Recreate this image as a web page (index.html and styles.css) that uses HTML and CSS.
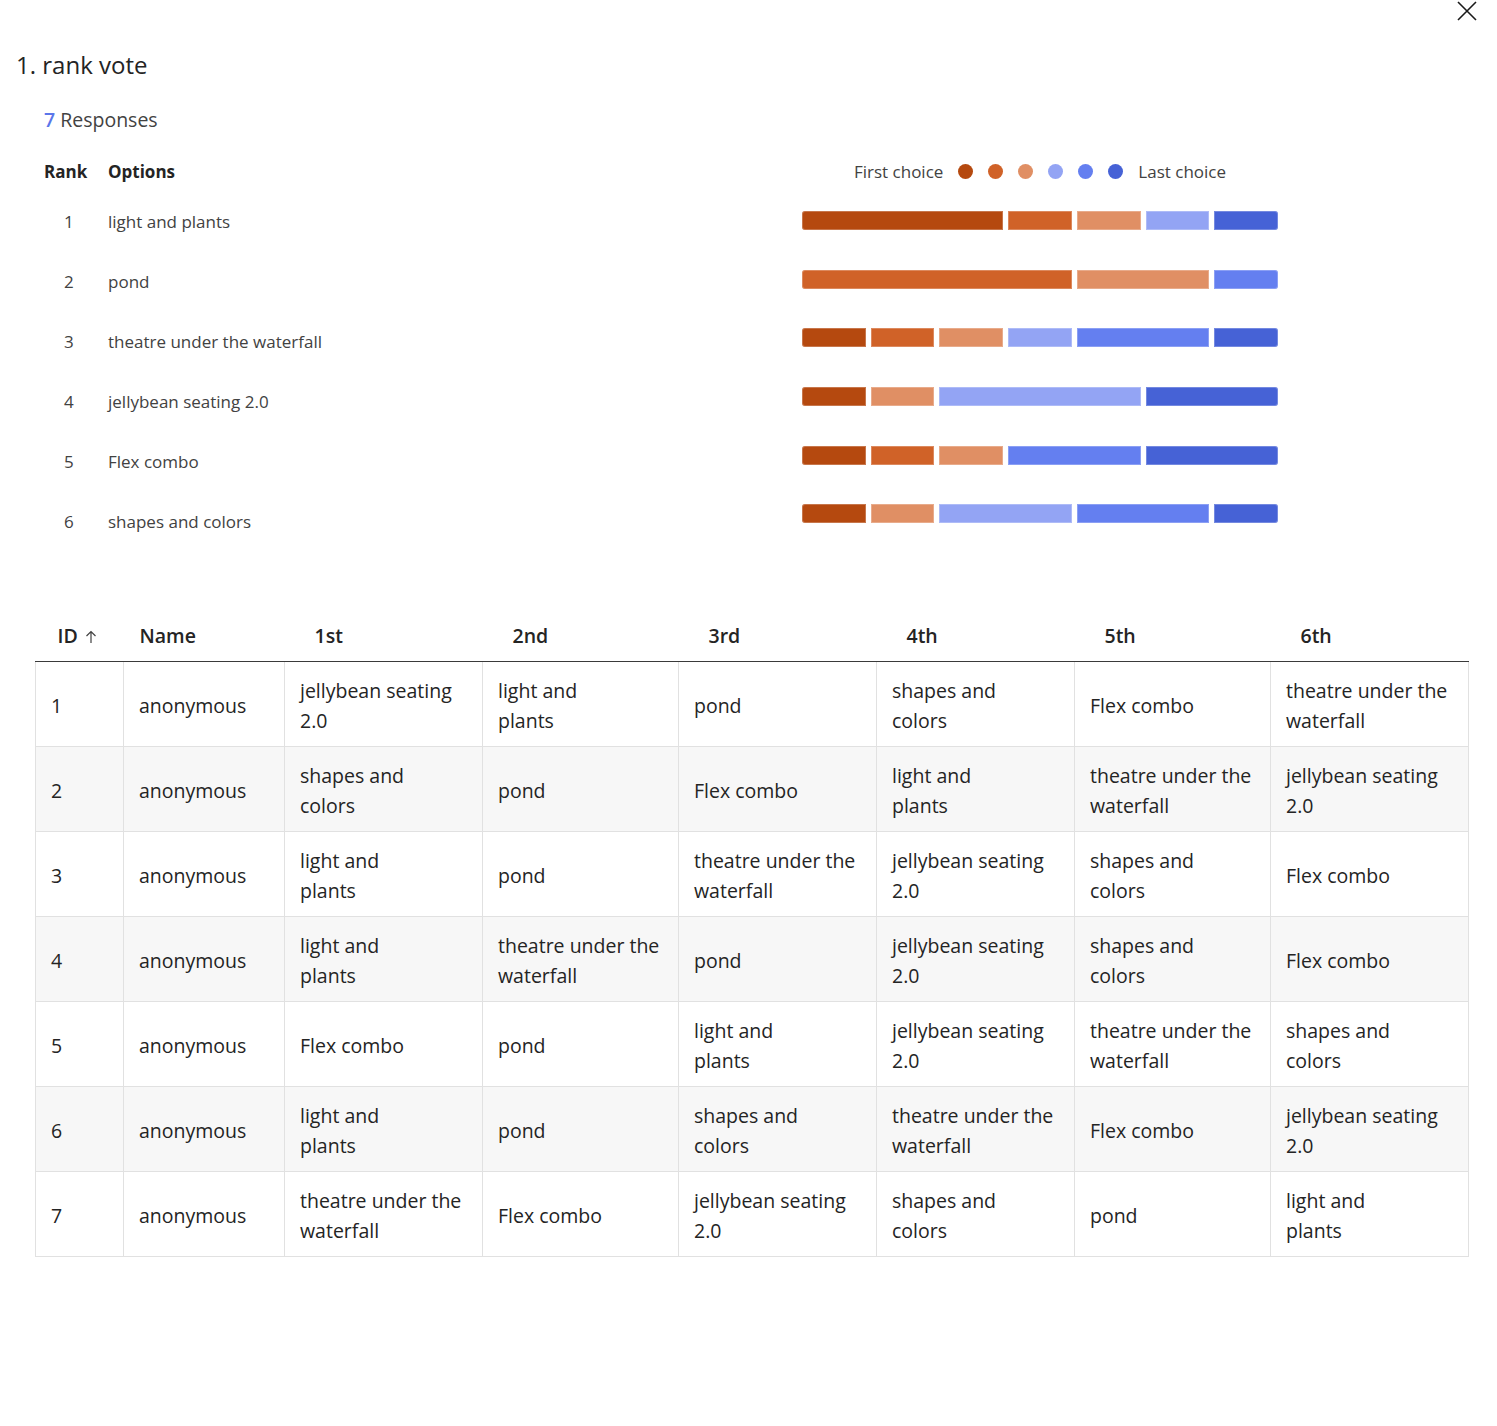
FILE: index.html
```html
<!DOCTYPE html>
<html lang="en">
<head>
<meta charset="utf-8">
<title>rank vote</title>
<link rel="stylesheet" href="styles.css">
</head>
<body>
<div class="page">
  <button class="close" aria-label="Close">
    <svg width="20" height="20" viewBox="0 0 20 20"><path d="M1 1 L19 19 M19 1 L1 19" stroke="#1a1a1a" stroke-width="1.6" fill="none"/></svg>
  </button>
  <h1 class="title">1. rank vote</h1>
  <div class="responses"><span class="count">7</span> Responses</div>

  <section class="summary">
    <div class="options">
      <div class="opt-head"><span class="rank-col">Rank</span><span>Options</span></div>
      <div class="opt-row"><span class="rank-col num">1</span><span>light and plants</span></div>
      <div class="opt-row"><span class="rank-col num">2</span><span>pond</span></div>
      <div class="opt-row"><span class="rank-col num">3</span><span>theatre under the waterfall</span></div>
      <div class="opt-row"><span class="rank-col num">4</span><span>jellybean seating 2.0</span></div>
      <div class="opt-row"><span class="rank-col num">5</span><span>Flex combo</span></div>
      <div class="opt-row"><span class="rank-col num">6</span><span>shapes and colors</span></div>
    </div>
    <div class="chart">
      <div class="legend">
        <span>First choice</span>
        <span class="dots"><i class="dot c1"></i><i class="dot c2"></i><i class="dot c3"></i><i class="dot c4"></i><i class="dot c5"></i><i class="dot c6"></i></span>
        <span>Last choice</span>
      </div>
      <div class="bar-row"><div class="bar">
        <span class="seg" style="width:calc(100% * 3 / 7)"><i class="fill c1"></i></span>
        <span class="seg" style="width:calc(100% * 1 / 7)"><i class="fill c2"></i></span>
        <span class="seg" style="width:calc(100% * 1 / 7)"><i class="fill c3"></i></span>
        <span class="seg" style="width:calc(100% * 1 / 7)"><i class="fill c4"></i></span>
        <span class="seg" style="width:calc(100% * 1 / 7)"><i class="fill c6"></i></span>
      </div></div>
      <div class="bar-row"><div class="bar">
        <span class="seg" style="width:calc(100% * 4 / 7)"><i class="fill c2"></i></span>
        <span class="seg" style="width:calc(100% * 2 / 7)"><i class="fill c3"></i></span>
        <span class="seg" style="width:calc(100% * 1 / 7)"><i class="fill c5"></i></span>
      </div></div>
      <div class="bar-row"><div class="bar">
        <span class="seg" style="width:calc(100% * 1 / 7)"><i class="fill c1"></i></span>
        <span class="seg" style="width:calc(100% * 1 / 7)"><i class="fill c2"></i></span>
        <span class="seg" style="width:calc(100% * 1 / 7)"><i class="fill c3"></i></span>
        <span class="seg" style="width:calc(100% * 1 / 7)"><i class="fill c4"></i></span>
        <span class="seg" style="width:calc(100% * 2 / 7)"><i class="fill c5"></i></span>
        <span class="seg" style="width:calc(100% * 1 / 7)"><i class="fill c6"></i></span>
      </div></div>
      <div class="bar-row"><div class="bar">
        <span class="seg" style="width:calc(100% * 1 / 7)"><i class="fill c1"></i></span>
        <span class="seg" style="width:calc(100% * 1 / 7)"><i class="fill c3"></i></span>
        <span class="seg" style="width:calc(100% * 3 / 7)"><i class="fill c4"></i></span>
        <span class="seg" style="width:calc(100% * 2 / 7)"><i class="fill c6"></i></span>
      </div></div>
      <div class="bar-row"><div class="bar">
        <span class="seg" style="width:calc(100% * 1 / 7)"><i class="fill c1"></i></span>
        <span class="seg" style="width:calc(100% * 1 / 7)"><i class="fill c2"></i></span>
        <span class="seg" style="width:calc(100% * 1 / 7)"><i class="fill c3"></i></span>
        <span class="seg" style="width:calc(100% * 2 / 7)"><i class="fill c5"></i></span>
        <span class="seg" style="width:calc(100% * 2 / 7)"><i class="fill c6"></i></span>
      </div></div>
      <div class="bar-row"><div class="bar">
        <span class="seg" style="width:calc(100% * 1 / 7)"><i class="fill c1"></i></span>
        <span class="seg" style="width:calc(100% * 1 / 7)"><i class="fill c3"></i></span>
        <span class="seg" style="width:calc(100% * 2 / 7)"><i class="fill c4"></i></span>
        <span class="seg" style="width:calc(100% * 2 / 7)"><i class="fill c5"></i></span>
        <span class="seg" style="width:calc(100% * 1 / 7)"><i class="fill c6"></i></span>
      </div></div>
    </div>
  </section>

  <table class="results">
    <colgroup>
      <col class="w-id"><col class="w-name"><col class="w-a"><col class="w-b"><col class="w-a"><col class="w-a"><col class="w-b"><col class="w-a">
    </colgroup>
    <thead>
      <tr>
        <th class="th-id">ID <svg class="sort" width="12" height="14" viewBox="0 0 12 14"><path d="M6 13 V1.5 M1.5 6 L6 1.5 L10.5 6" stroke="#424242" stroke-width="1.2" fill="none"/></svg></th>
        <th class="th-name">Name</th>
        <th class="th-rank">1st</th>
        <th class="th-rank">2nd</th>
        <th class="th-rank">3rd</th>
        <th class="th-rank">4th</th>
        <th class="th-rank">5th</th>
        <th class="th-rank">6th</th>
      </tr>
    </thead>
    <tbody>
      <tr><td>1</td><td>anonymous</td><td>jellybean seating<br>2.0</td><td>light and<br>plants</td><td>pond</td><td>shapes and<br>colors</td><td>Flex combo</td><td>theatre under the<br>waterfall</td></tr>
      <tr><td>2</td><td>anonymous</td><td>shapes and<br>colors</td><td>pond</td><td>Flex combo</td><td>light and<br>plants</td><td>theatre under the<br>waterfall</td><td>jellybean seating<br>2.0</td></tr>
      <tr><td>3</td><td>anonymous</td><td>light and<br>plants</td><td>pond</td><td>theatre under the<br>waterfall</td><td>jellybean seating<br>2.0</td><td>shapes and<br>colors</td><td>Flex combo</td></tr>
      <tr><td>4</td><td>anonymous</td><td>light and<br>plants</td><td>theatre under the<br>waterfall</td><td>pond</td><td>jellybean seating<br>2.0</td><td>shapes and<br>colors</td><td>Flex combo</td></tr>
      <tr><td>5</td><td>anonymous</td><td>Flex combo</td><td>pond</td><td>light and<br>plants</td><td>jellybean seating<br>2.0</td><td>theatre under the<br>waterfall</td><td>shapes and<br>colors</td></tr>
      <tr><td>6</td><td>anonymous</td><td>light and<br>plants</td><td>pond</td><td>shapes and<br>colors</td><td>theatre under the<br>waterfall</td><td>Flex combo</td><td>jellybean seating<br>2.0</td></tr>
      <tr><td>7</td><td>anonymous</td><td>theatre under the<br>waterfall</td><td>Flex combo</td><td>jellybean seating<br>2.0</td><td>shapes and<br>colors</td><td>pond</td><td>light and<br>plants</td></tr>
    </tbody>
  </table>
</div>
</body>
</html>
```

FILE: styles.css
```css
* { box-sizing: border-box; }
html, body { margin: 0; padding: 0; background: #fff; }
body {
  font-family: "Open Sans", "Noto Sans", "Liberation Sans", sans-serif;
  color: #242424;
}
.page {
  position: relative;
  width: 1497px;
  min-height: 1426px;
  padding: 49px 29px 0 16px;
}
.close {
  position: absolute;
  top: 0;
  right: 19px;
  width: 22px;
  height: 22px;
  padding: 1px;
  border: 0;
  background: transparent;
}
.title {
  margin: 0;
  font-size: 24px;
  line-height: 32px;
  font-weight: 400;
  color: #242424;
}
.responses {
  margin: 25px 0 0 28px;
  font-size: 19.5px;
  line-height: 28px;
  color: #424242;
}
.responses .count { color: #5b76ea; font-weight: 600; }

.summary {
  display: grid;
  grid-template-columns: 1fr 476px;
  margin: 17px 190px 0 28px;
}
.opt-head, .opt-row {
  display: flex;
  align-items: center;
  font-size: 17px;
}
.opt-head { height: 40px; font-weight: 700; color: #242424; }
.opt-row { height: 60px; color: #424242; }
.rank-col { width: 64px; }
.num { padding-left: 20px; }

.chart { display: flex; flex-direction: column; }
.legend {
  height: 40px;
  display: flex;
  align-items: center;
  justify-content: center;
  gap: 15px;
  font-size: 17px;
  color: #424242;
}
.dots { display: flex; gap: 15px; }
.dot { display: block; width: 15px; height: 15px; border-radius: 50%; }
.bar-row {
  height: 58.7px;
  display: flex;
  align-items: center;
}
.bar {
  display: flex;
  width: 481px;
  margin-right: -5px;
}
.seg { display: block; padding-right: 5px; }
.fill {
  display: block;
  height: 19px;
  box-shadow: inset 0 0 0 1px rgba(255,255,255,0.25);
}
.seg:first-child .fill { border-radius: 3px 0 0 3px; }
.seg:last-child .fill { border-radius: 0 3px 3px 0; }
.c1 { background: #b5490f; }
.c2 { background: #d06228; }
.c3 { background: #e08f64; }
.c4 { background: #93a4f4; }
.c5 { background: #647ff0; }
.c6 { background: #4662d6; }

.results {
  margin: 60px 0 0 19px;
  width: 1433px;
  table-layout: fixed;
  border-collapse: collapse;
  font-size: 19.5px;
  color: #242424;
}
.w-id { width: 88px; }
.w-name { width: 161px; }
.w-a { width: 198px; }
.w-b { width: 196px; }
.results th {
  height: 50px;
  text-align: left;
  font-weight: 600;
  border-bottom: 1px solid #3a3a3a;
  padding: 0;
  vertical-align: middle;
}
.th-id { padding-left: 22px !important; }
.th-name { padding-left: 16px !important; }
.th-rank { padding-left: 30px !important; }
.sort { vertical-align: -1px; margin-left: 2px; }
.results td {
  height: 85px;
  padding: 4px 15px 0;
  line-height: 30px;
  border: 1px solid #e1e1e1;
  vertical-align: middle;
}
.results tbody tr:nth-child(even) td { background: #f7f7f7; }
```
